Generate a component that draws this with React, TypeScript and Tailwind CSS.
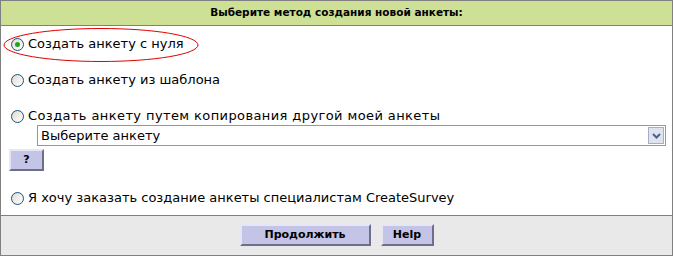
import React from "react";

function Radio({ checked }: { checked?: boolean }) {
  return (
    <span className="relative inline-flex h-[13px] w-[13px] shrink-0 items-center justify-center rounded-full border border-[#1c5180] bg-gradient-to-br from-[#dcdcd6] to-[#ffffff]">
      {checked && <span className="h-[5px] w-[5px] rounded-full bg-[#21a121]" />}
    </span>
  );
}

function Btn({ children, className }: { children: React.ReactNode; className?: string }) {
  return (
    <div
      className={
        "flex items-center justify-center border-2 border-t-[#e6e6f5] border-l-[#e6e6f5] border-b-[#6e6e8a] border-r-[#6e6e8a] bg-[#c4c4e6] text-[11px] font-bold text-black " +
        (className ?? "")
      }
    >
      {children}
    </div>
  );
}

export default function App() {
  const font = { fontFamily: '"DejaVu Sans", Verdana, sans-serif' };
  return (
    <div className="h-[257px] w-[673px] bg-white" style={font}>
      <div className="relative flex h-[256px] w-[673px] flex-col border border-[#808080]">
        <div className="flex h-[25px] shrink-0 items-center justify-center border-b border-[#808080] bg-[#cde096] text-[10.5px] font-bold text-black">
          Выберите метод создания новой анкеты:
        </div>
        <div className="flex h-[189px] shrink-0 flex-col text-[13px] text-black">
          <div className="mt-[10px] flex h-[16px] items-center gap-[4px] pl-[10px]">
            <Radio checked />
            <span>Создать анкету с нуля</span>
          </div>
          <div className="mt-[20px] flex h-[16px] items-center gap-[4px] pl-[10px]">
            <Radio />
            <span>Создать анкету из шаблона</span>
          </div>
          <div className="mt-[20px] flex h-[16px] items-center gap-[4px] pl-[10px]">
            <Radio />
            <span className="tracking-[0.4px]">Создать анкету путем копирования другой моей анкеты</span>
          </div>
          <div className="ml-[36px] mt-[1px] flex h-[21px] w-[629px] items-center justify-between border border-[#7f9db9] bg-white pl-[3px]">
            <span>Выберите анкету</span>
            <span className="mr-[1px] flex h-[17px] w-[16px] items-center justify-center border border-[#a4afc7] bg-[#dfe3ee]">
              <svg width="9" height="6" viewBox="0 0 9 6">
                <path d="M1 1 L4.5 4.5 L8 1" stroke="#4d6185" strokeWidth="2" fill="none" />
              </svg>
            </span>
          </div>
          <Btn className="ml-[8px] mt-[3px] h-[22px] w-[35px]">?</Btn>
          <div className="mt-[19px] flex h-[16px] items-center gap-[4px] pl-[10px]">
            <Radio />
            <span>Я хочу заказать создание анкеты специалистам CreateSurvey</span>
          </div>
        </div>
        <div className="flex flex-1 items-center justify-center gap-[10px] border-t border-[#808080] bg-[#e9e9e9] pb-[1px]">
          <Btn className="h-[22px] w-[131px]">Продолжить</Btn>
          <Btn className="h-[22px] w-[53px]">Help</Btn>
        </div>
        <svg className="pointer-events-none absolute left-[1px] top-[26px]" width="200" height="38" viewBox="0 0 200 38">
          <ellipse cx="99" cy="18" rx="97" ry="16.5" fill="none" stroke="#e00000" strokeWidth="1" />
        </svg>
      </div>
    </div>
  );
}
